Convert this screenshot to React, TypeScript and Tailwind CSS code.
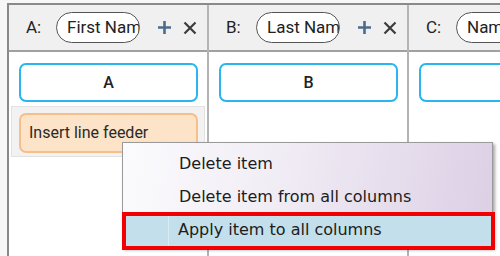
import React from "react";

const font = { fontFamily: 'Roboto, "Noto Sans", sans-serif' };
const menuFont = { fontFamily: '"DejaVu Sans", "Noto Sans", sans-serif' };

function Plus() {
  return (
    <svg width="15" height="15" viewBox="0 0 15 15" className="shrink-0">
      <path d="M7.5 1v13M1 7.5h13" stroke="#4d6b8a" strokeWidth="2.6" />
    </svg>
  );
}
function Cross() {
  return (
    <svg width="14" height="14" viewBox="0 0 14 14" className="shrink-0">
      <path d="M1.5 1.5l11 11M12.5 1.5l-11 11" stroke="#3c3c3c" strokeWidth="2.2" />
    </svg>
  );
}

function Column({ letter, name, item }: { letter: string; name: string; item?: string }) {
  return (
    <div className="flex flex-col shrink-0 w-[200px] border-r-2 border-[#b4b4b4]">
      <div className="h-[47px] bg-[#f0f0f0] border-b-2 border-[#a0a0a0] flex items-center pl-[17px]">
        <span className="text-[17px] text-[#222] w-[30px] shrink-0">{letter}:</span>
        <div className="h-[31px] w-[84px] shrink-0 rounded-full border-[1.5px] border-[#555] bg-white overflow-hidden flex items-center pl-[10px]">
          <span className="text-[17px] text-[#222] whitespace-nowrap">{name}</span>
        </div>
        <div className="flex items-center ml-[17px] gap-[11px]">
          <Plus />
          <Cross />
        </div>
      </div>
      <div className="bg-white flex-1 flex flex-col">
        <div className="mt-[11px] ml-[10px] h-[39px] w-[179px] rounded-[7px] border-2 border-[#2bb5f0] flex items-center justify-center text-[16px] font-medium text-[#222]">
          {letter}
        </div>
        {item && (
          <div className="mt-[4px] ml-[2px] w-[194px] h-[51px] bg-[#f2f2f2] border border-[#e2e2e2] pt-[6px] pl-[7px]">
            <div className="w-[179px] h-[40px] rounded-[7px] bg-[#fde3c7] border-2 border-[#f6bf8a] flex items-center pl-[8px] text-[16px] text-[#2a2a2a]">
              {item}
            </div>
          </div>
        )}
      </div>
    </div>
  );
}

export default function App() {
  return (
    <div className="w-[500px] h-[256px] overflow-hidden bg-[#f7f7f7] relative" style={font}>
      <div className="ml-[7px] mt-[3px] h-[253px] border-t-2 border-l-2 border-[#8a8a8a] flex overflow-hidden">
        <Column letter="A" name="First Name" item="Insert line feeder" />
        <Column letter="B" name="Last Name" />
        <Column letter="C" name="Name" />
      </div>
      <div
        className="absolute left-[122px] top-[142px] w-[371px] h-[106px] border border-[#9a9a9a] shadow-[2px_2px_3px_rgba(0,0,0,0.35)] bg-[linear-gradient(100deg,#fbfbfd_0%,#f1edf5_40%,#dccfe5_100%)] pt-[4px] px-[1px] text-[16px] text-[#1c1c1c]"
        style={menuFont}
      >
        <div className="h-[33px] flex items-center pl-[55px]">Delete item</div>
        <div className="h-[33px] flex items-center pl-[55px]">Delete item from all columns</div>
        <div className="h-[33px] flex items-center bg-[#c3dfeb]">
          <div className="w-[45px] h-full border-r border-[#d8ebf3]" />
          <span className="pl-[9px]">Apply item to all columns</span>
        </div>
      </div>
      <div className="absolute left-[122px] top-[212px] w-[373px] h-[38px] border-4 border-[#f00000]" />
    </div>
  );
}
